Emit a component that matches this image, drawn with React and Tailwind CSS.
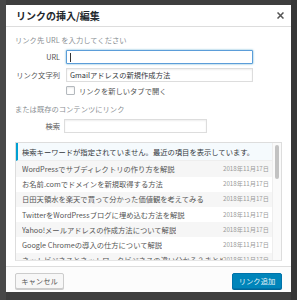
import React from "react";

const rows = [
  "WordPressでサブディレクトリの作り方を解説",
  "お名前.comでドメインを新規取得する方法",
  "日田天領水を楽天で買って分かった価値観を考えてみる",
  "TwitterをWordPressブログに埋め込む方法を解説",
  "Yahoo!メールアドレスの作成方法について解説",
  "Google Chromeの導入の仕方について解説",
  "ネットビジネスとネットワークビジネスの違い分かる？まとめ",
];

export default function App() {
  return (
    <div
      className="w-[297px] h-[300px] bg-[#3e3e3e] flex overflow-hidden"
      style={{ fontFamily: '"Noto Sans CJK JP", "Noto Sans", sans-serif' }}
    >
      <div className="w-[6px] h-full bg-[#484848] shrink-0" />
      <div className="pt-[5px] shrink-0">
        <div className="w-[285px] h-[287px] bg-white flex flex-col">
          {/* header */}
          <div className="h-[22px] shrink-0 border-b border-[#dddddd] flex items-center justify-between pl-[10px] pr-[7px]">
            <span className="text-[10px] leading-[12px] font-bold text-[#23282d]">リンクの挿入/編集</span>
            <svg width="7" height="7" viewBox="0 0 10 10">
              <path d="M1.5 1.5 L8.5 8.5 M8.5 1.5 L1.5 8.5" stroke="#555" strokeWidth="2.2" strokeLinecap="square" />
            </svg>
          </div>
          {/* body */}
          <div className="flex-1 px-[9px] flex flex-col text-[7.3px]">
            <div className="mt-[8px] h-[10px] leading-[10px] text-[#8a8f94]">リンク先 URL を入力してください</div>
            <div className="mt-[5px] flex items-center h-[14px]">
              <div className="w-[45px] text-right text-[#555] leading-[10px]">URL</div>
              <div className="ml-[6px] w-[187px] h-[14px] border border-[#5b9dd9] shadow-[0_0_2px_rgba(30,140,190,0.8)] rounded-[1px] bg-white flex items-center pl-[3px]">
                <div className="w-[1px] h-[9px] bg-[#333]" />
              </div>
            </div>
            <div className="mt-[4px] flex items-center h-[14px]">
              <div className="w-[45px] text-right text-[#555] leading-[10px]">リンク文字列</div>
              <div className="ml-[6px] w-[187px] h-[14px] border border-[#dddddd] shadow-[inset_0_1px_2px_rgba(0,0,0,0.07)] bg-white flex items-center pl-[3px] text-[#32373c] leading-[10px]">
                Gmailアドレスの新規作成方法
              </div>
            </div>
            <div className="mt-[4px] flex items-center h-[9px]">
              <div className="ml-[51px] w-[9px] h-[9px] border border-[#b4b9be] rounded-[1px] bg-white shadow-[inset_0_1px_2px_rgba(0,0,0,0.1)]" />
              <div className="ml-[4px] text-[#555] leading-[10px]">リンクを新しいタブで開く</div>
            </div>
            <div className="mt-[9px] h-[10px] leading-[10px] text-[#8a8f94]">または既存のコンテンツにリンク</div>
            <div className="mt-[5px] flex items-center h-[14px]">
              <div className="w-[45px] text-right text-[#555] leading-[10px]">検索</div>
              <div className="ml-[4px] w-[143px] h-[14px] border border-[#dddddd] shadow-[inset_0_1px_2px_rgba(0,0,0,0.07)] bg-white" />
            </div>
            <div className="mt-[9px] h-[119px] border border-[#dddddd] border-b-[#e5e5e5] flex overflow-hidden relative">
              <div className="flex-1 flex flex-col min-w-0">
                <div className="h-[18.4px] shrink-0 bg-[#f5fafd] border-l-[2px] border-[#00a0d2] flex items-center pl-[4px] text-[#32373c] leading-[10px] border-b border-b-[#eeeeee]">
                  検索キーワードが指定されていません。最近の項目を表示しています。
                </div>
                {rows.map((r, i) => (
                  <div
                    key={i}
                    className={
                      "h-[15.2px] shrink-0 flex items-center justify-between pl-[6px] pr-[3px] leading-[10px] whitespace-nowrap " +
                      (i % 2 === 0 ? "bg-[#f6f6f6]" : "bg-white")
                    }
                  >
                    <span className="text-[#555] overflow-hidden">{r}</span>
                    <span className="text-[6.2px] text-[#999] shrink-0">2018年11月17日</span>
                  </div>
                ))}
              </div>
              <div className="w-[9px] shrink-0 bg-[#fafafa] border-l border-[#eeeeee] flex justify-center pt-[2px]">
                <div className="w-[4px] h-[34px] rounded-full bg-[#c2c2c2]" />
              </div>
            </div>
          </div>
          {/* footer */}
          <div className="h-[26px] shrink-0 border-t border-[#dddddd] bg-[#fcfcfc] flex items-start justify-between px-[9px] pt-[6px] text-[7.3px]">
            <div className="w-[49px] h-[15.5px] border border-[#cccccc] bg-[#f7f7f7] rounded-[2px] shadow-[0_1px_0_#cccccc] flex items-center justify-center text-[#555] leading-[10px]">
              キャンセル
            </div>
            <div className="w-[50px] h-[15.5px] border border-[#0073aa] bg-[#0085ba] rounded-[2px] shadow-[0_1px_0_#006799] flex items-center justify-center text-[#e6f3f9] leading-[10px]">
              リンク追加
            </div>
          </div>
        </div>
      </div>
      <div className="flex-1 h-full bg-[#363636]" />
    </div>
  );
}
